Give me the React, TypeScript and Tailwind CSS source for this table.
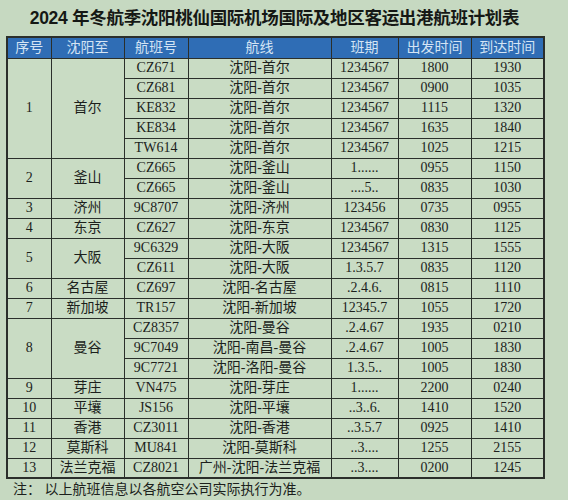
type Flight = [string, string, string, string, string];

interface Group {
  no: string;
  city: string;
  flights: Flight[];
}

const groups: Group[] = [
  {
    no: "1",
    city: "首尔",
    flights: [
      ["CZ671", "沈阳-首尔", "1234567", "1800", "1930"],
      ["CZ681", "沈阳-首尔", "1234567", "0900", "1035"],
      ["KE832", "沈阳-首尔", "1234567", "1115", "1320"],
      ["KE834", "沈阳-首尔", "1234567", "1635", "1840"],
      ["TW614", "沈阳-首尔", "1234567", "1025", "1215"],
    ],
  },
  {
    no: "2",
    city: "釜山",
    flights: [
      ["CZ665", "沈阳-釜山", "1......", "0955", "1150"],
      ["CZ665", "沈阳-釜山", "....5..", "0835", "1030"],
    ],
  },
  { no: "3", city: "济州", flights: [["9C8707", "沈阳-济州", "123456", "0735", "0955"]] },
  { no: "4", city: "东京", flights: [["CZ627", "沈阳-东京", "1234567", "0830", "1125"]] },
  {
    no: "5",
    city: "大阪",
    flights: [
      ["9C6329", "沈阳-大阪", "1234567", "1315", "1555"],
      ["CZ611", "沈阳-大阪", "1.3.5.7", "0835", "1120"],
    ],
  },
  { no: "6", city: "名古屋", flights: [["CZ697", "沈阳-名古屋", ".2.4.6.", "0815", "1110"]] },
  { no: "7", city: "新加坡", flights: [["TR157", "沈阳-新加坡", "12345.7", "1055", "1720"]] },
  {
    no: "8",
    city: "曼谷",
    flights: [
      ["CZ8357", "沈阳-曼谷", ".2.4.67", "1935", "0210"],
      ["9C7049", "沈阳-南昌-曼谷", ".2.4.67", "1005", "1830"],
      ["9C7721", "沈阳-洛阳-曼谷", "1.3.5..", "1005", "1830"],
    ],
  },
  { no: "9", city: "芽庄", flights: [["VN475", "沈阳-芽庄", "1......", "2200", "0240"]] },
  { no: "10", city: "平壤", flights: [["JS156", "沈阳-平壤", "..3..6.", "1410", "1520"]] },
  { no: "11", city: "香港", flights: [["CZ3011", "沈阳-香港", "..3.5.7", "0925", "1410"]] },
  { no: "12", city: "莫斯科", flights: [["MU841", "沈阳-莫斯科", "..3....", "1255", "2155"]] },
  { no: "13", city: "法兰克福", flights: [["CZ8021", "广州-沈阳-法兰克福", "..3....", "0200", "1245"]] },
];

const headers = ["序号", "沈阳至", "航班号", "航线", "班期", "出发时间", "到达时间"];
const widths = ["w-[44px]", "w-[73px]", "w-[64px]", "w-[143px]", "w-[67px]", "w-[73px]", "w-[73px]"];

const cell = "border border-[#2b2f2b] h-[20px] p-0 text-center align-middle leading-none";

export default function App() {
  return (
    <div className="w-[568px] h-[500px] bg-[#c6d9c1] text-[#1c1f1c] font-['Liberation_Serif','Noto_Sans_CJK_SC',serif] overflow-hidden">
      <div className="h-[36px] w-[549px] flex items-center justify-center pt-[1px]">
        <h1 className="text-[17.5px] font-bold tracking-[-0.3px] text-[#151815] font-['Liberation_Sans','Noto_Sans_CJK_SC',sans-serif]">
          2024 年冬航季沈阳桃仙国际机场国际及地区客运出港航班计划表
        </h1>
      </div>
      <table className="ml-[6px] w-[537px] table-fixed border-collapse border-2 border-[#2b2f2b] text-[14px]">
        <colgroup>
          {widths.map((w, i) => (
            <col key={i} className={w} />
          ))}
        </colgroup>
        <thead>
          <tr className="bg-[#2f6db5] text-[#d4e4f4]">
            {headers.map((h) => (
              <th key={h} className="border border-[#2b2f2b] h-[21px] p-0 font-normal text-center leading-none">
                {h}
              </th>
            ))}
          </tr>
        </thead>
        <tbody className="bg-[#c9dcc4]">
          {groups.map((g) =>
            g.flights.map((f, i) => (
              <tr key={g.no + "-" + i}>
                {i === 0 && (
                  <>
                    <td rowSpan={g.flights.length} className={cell}>
                      {g.no}
                    </td>
                    <td rowSpan={g.flights.length} className={cell}>
                      {g.city}
                    </td>
                  </>
                )}
                {f.map((v, j) => (
                  <td key={j} className={cell}>
                    {v}
                  </td>
                ))}
              </tr>
            ))
          )}
        </tbody>
      </table>
      <p className="ml-[13px] mt-[4px] text-[14px] leading-none text-[#1c1f1c]">注：&nbsp;以上航班信息以各航空公司实际执行为准。</p>
    </div>
  );
}
